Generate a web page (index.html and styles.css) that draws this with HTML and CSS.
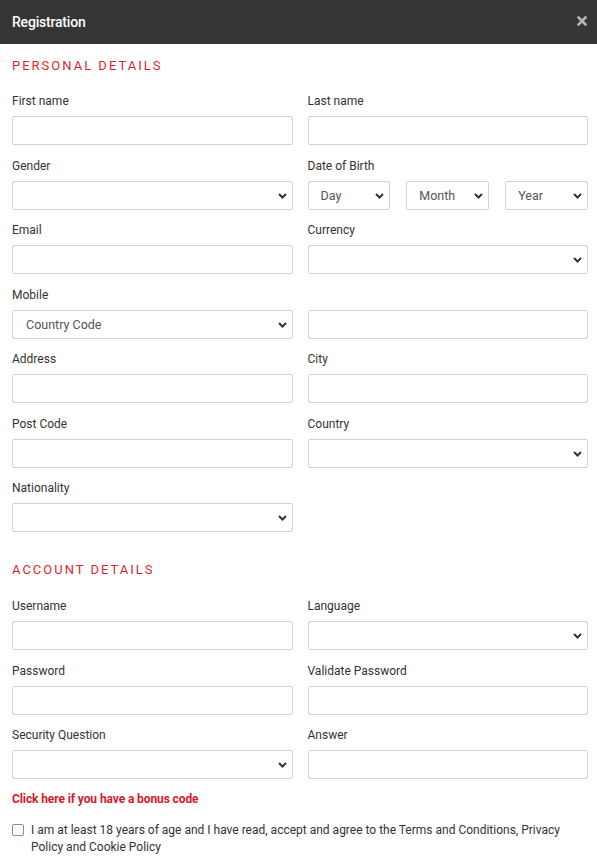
FILE: index.html
```html
<!DOCTYPE html>
<html lang="en">
<head>
<meta charset="utf-8">
<title>Registration</title>
<link rel="stylesheet" href="styles.css">
</head>
<body>
<div class="modal">
  <header class="modal-header">
    <h1 class="modal-title">Registration</h1>
    <button class="close" aria-label="Close">
      <svg width="10" height="10" viewBox="0 0 10 10"><path d="M1.5 1.5 L8.5 8.5 M8.5 1.5 L1.5 8.5" stroke="#b5b5b5" stroke-width="2.6" stroke-linecap="square"/></svg>
    </button>
  </header>
  <div class="modal-body">
    <h2 class="section-title first">PERSONAL DETAILS</h2>
    <div class="grid">
      <div class="group"><label class="label">First name</label><input class="field" type="text"></div>
      <div class="group"><label class="label">Last name</label><input class="field" type="text"></div>

      <div class="group"><label class="label">Gender</label>
        <div class="select-wrap"><select class="field select"><option></option></select><svg class="chev" width="9" height="6" viewBox="0 0 9 6"><path d="M1 1 L4.5 4.5 L8 1" fill="none" stroke="#333" stroke-width="2"/></svg></div>
      </div>
      <div class="group"><label class="label">Date of Birth</label>
        <div class="dob">
          <div class="select-wrap"><select class="field select"><option>Day</option></select><svg class="chev" width="9" height="6" viewBox="0 0 9 6"><path d="M1 1 L4.5 4.5 L8 1" fill="none" stroke="#333" stroke-width="2"/></svg></div>
          <div class="select-wrap"><select class="field select"><option>Month</option></select><svg class="chev" width="9" height="6" viewBox="0 0 9 6"><path d="M1 1 L4.5 4.5 L8 1" fill="none" stroke="#333" stroke-width="2"/></svg></div>
          <div class="select-wrap"><select class="field select"><option>Year</option></select><svg class="chev" width="9" height="6" viewBox="0 0 9 6"><path d="M1 1 L4.5 4.5 L8 1" fill="none" stroke="#333" stroke-width="2"/></svg></div>
        </div>
      </div>

      <div class="group"><label class="label">Email</label><input class="field" type="text"></div>
      <div class="group"><label class="label">Currency</label>
        <div class="select-wrap"><select class="field select"><option></option></select><svg class="chev" width="9" height="6" viewBox="0 0 9 6"><path d="M1 1 L4.5 4.5 L8 1" fill="none" stroke="#333" stroke-width="2"/></svg></div>
      </div>

      <div class="group"><label class="label">Mobile</label>
        <div class="select-wrap"><select class="field select"><option>Country Code</option></select><svg class="chev" width="9" height="6" viewBox="0 0 9 6"><path d="M1 1 L4.5 4.5 L8 1" fill="none" stroke="#333" stroke-width="2"/></svg></div>
      </div>
      <div class="group"><label class="label">&nbsp;</label><input class="field" type="text"></div>

      <div class="group"><label class="label">Address</label><input class="field" type="text"></div>
      <div class="group"><label class="label">City</label><input class="field" type="text"></div>

      <div class="group"><label class="label">Post Code</label><input class="field" type="text"></div>
      <div class="group"><label class="label">Country</label>
        <div class="select-wrap"><select class="field select"><option></option></select><svg class="chev" width="9" height="6" viewBox="0 0 9 6"><path d="M1 1 L4.5 4.5 L8 1" fill="none" stroke="#333" stroke-width="2"/></svg></div>
      </div>

      <div class="group"><label class="label">Nationality</label>
        <div class="select-wrap"><select class="field select"><option></option></select><svg class="chev" width="9" height="6" viewBox="0 0 9 6"><path d="M1 1 L4.5 4.5 L8 1" fill="none" stroke="#333" stroke-width="2"/></svg></div>
      </div>
    </div>

    <h2 class="section-title second">ACCOUNT DETAILS</h2>
    <div class="grid">
      <div class="group"><label class="label">Username</label><input class="field" type="text"></div>
      <div class="group"><label class="label">Language</label>
        <div class="select-wrap"><select class="field select"><option></option></select><svg class="chev" width="9" height="6" viewBox="0 0 9 6"><path d="M1 1 L4.5 4.5 L8 1" fill="none" stroke="#333" stroke-width="2"/></svg></div>
      </div>

      <div class="group"><label class="label">Password</label><input class="field" type="password"></div>
      <div class="group"><label class="label">Validate Password</label><input class="field" type="password"></div>

      <div class="group"><label class="label">Security Question</label>
        <div class="select-wrap"><select class="field select"><option></option></select><svg class="chev" width="9" height="6" viewBox="0 0 9 6"><path d="M1 1 L4.5 4.5 L8 1" fill="none" stroke="#333" stroke-width="2"/></svg></div>
      </div>
      <div class="group"><label class="label">Answer</label><input class="field" type="text"></div>
    </div>

    <a class="bonus" href="#">Click here if you have a bonus code</a>

    <label class="terms">
      <span class="checkbox"></span>
      <span class="terms-text">I am at least 18 years of age and I have read, accept and agree to the Terms and Conditions, Privacy Policy and Cookie Policy</span>
    </label>
  </div>
</div>
</body>
</html>
```
FILE: styles.css
```css
* { box-sizing: border-box; }
html, body { margin: 0; padding: 0; background: #fff; }
body { font-family: Roboto, "Liberation Sans", Arial, sans-serif; color: #333; }

.modal { width: 597px; }

.modal-header {
  height: 44px;
  background: #353535;
  display: flex;
  align-items: center;
  justify-content: space-between;
  padding: 0 9px 0 12px;
}
.modal-title {
  margin: 0;
  font-size: 14px;
  font-weight: 500;
  color: #fff;
  letter-spacing: -0.2px;
}
.close {
  border: 0;
  background: none;
  padding: 0;
  width: 12px;
  height: 12px;
  display: flex;
  align-items: center;
  justify-content: center;
  margin-top: -3px;
}

.modal-body { padding: 14px 9px 0 12px; }

.section-title {
  margin: 0 0 19px;
  font-size: 13px;
  line-height: 16px;
  font-weight: 400;
  color: #e01f2d;
  letter-spacing: 2px;
}
.section-title.second { margin-top: 17.5px; margin-bottom: 20px; }

.grid {
  display: grid;
  grid-template-columns: 1fr 1fr;
  column-gap: 15px;
}

.group { margin-bottom: 12.5px; }

.label {
  display: block;
  font-size: 12px;
  line-height: 16px;
  color: #333;
  margin-bottom: 7px;
}

.field {
  display: block;
  width: 100%;
  height: 29px;
  border: 1px solid #cfd3d9;
  border-radius: 2px;
  background: #fff;
  font-family: Roboto, "Liberation Sans", Arial, sans-serif;
  font-size: 12.5px;
  color: #555;
  padding: 0 13px;
  outline: none;
}

.select-wrap { position: relative; }
.select {
  -webkit-appearance: none;
  appearance: none;
  padding-right: 24px;
}
.chev {
  position: absolute;
  right: 6px;
  top: 12px;
  pointer-events: none;
}

.dob {
  display: grid;
  grid-template-columns: 1fr 1fr 1fr;
  column-gap: 16px;
}
.dob .select { padding-left: 12px; }

.bonus {
  display: block;
  margin-top: -1px;
  font-size: 12px;
  line-height: 16px;
  font-weight: 700;
  color: #d7192b;
  text-decoration: none;
  letter-spacing: -0.1px;
}

.terms {
  display: flex;
  align-items: flex-start;
  gap: 7px;
  margin-top: 15px;
}
.checkbox {
  flex: none;
  width: 12px;
  height: 12px;
  border: 1px solid #8c8c8c;
  border-radius: 2px;
  margin-top: 2px;
  background: #fff;
}
.terms-text {
  font-size: 12px;
  line-height: 17px;
  color: #333;
  padding-right: 20px;
}
```
